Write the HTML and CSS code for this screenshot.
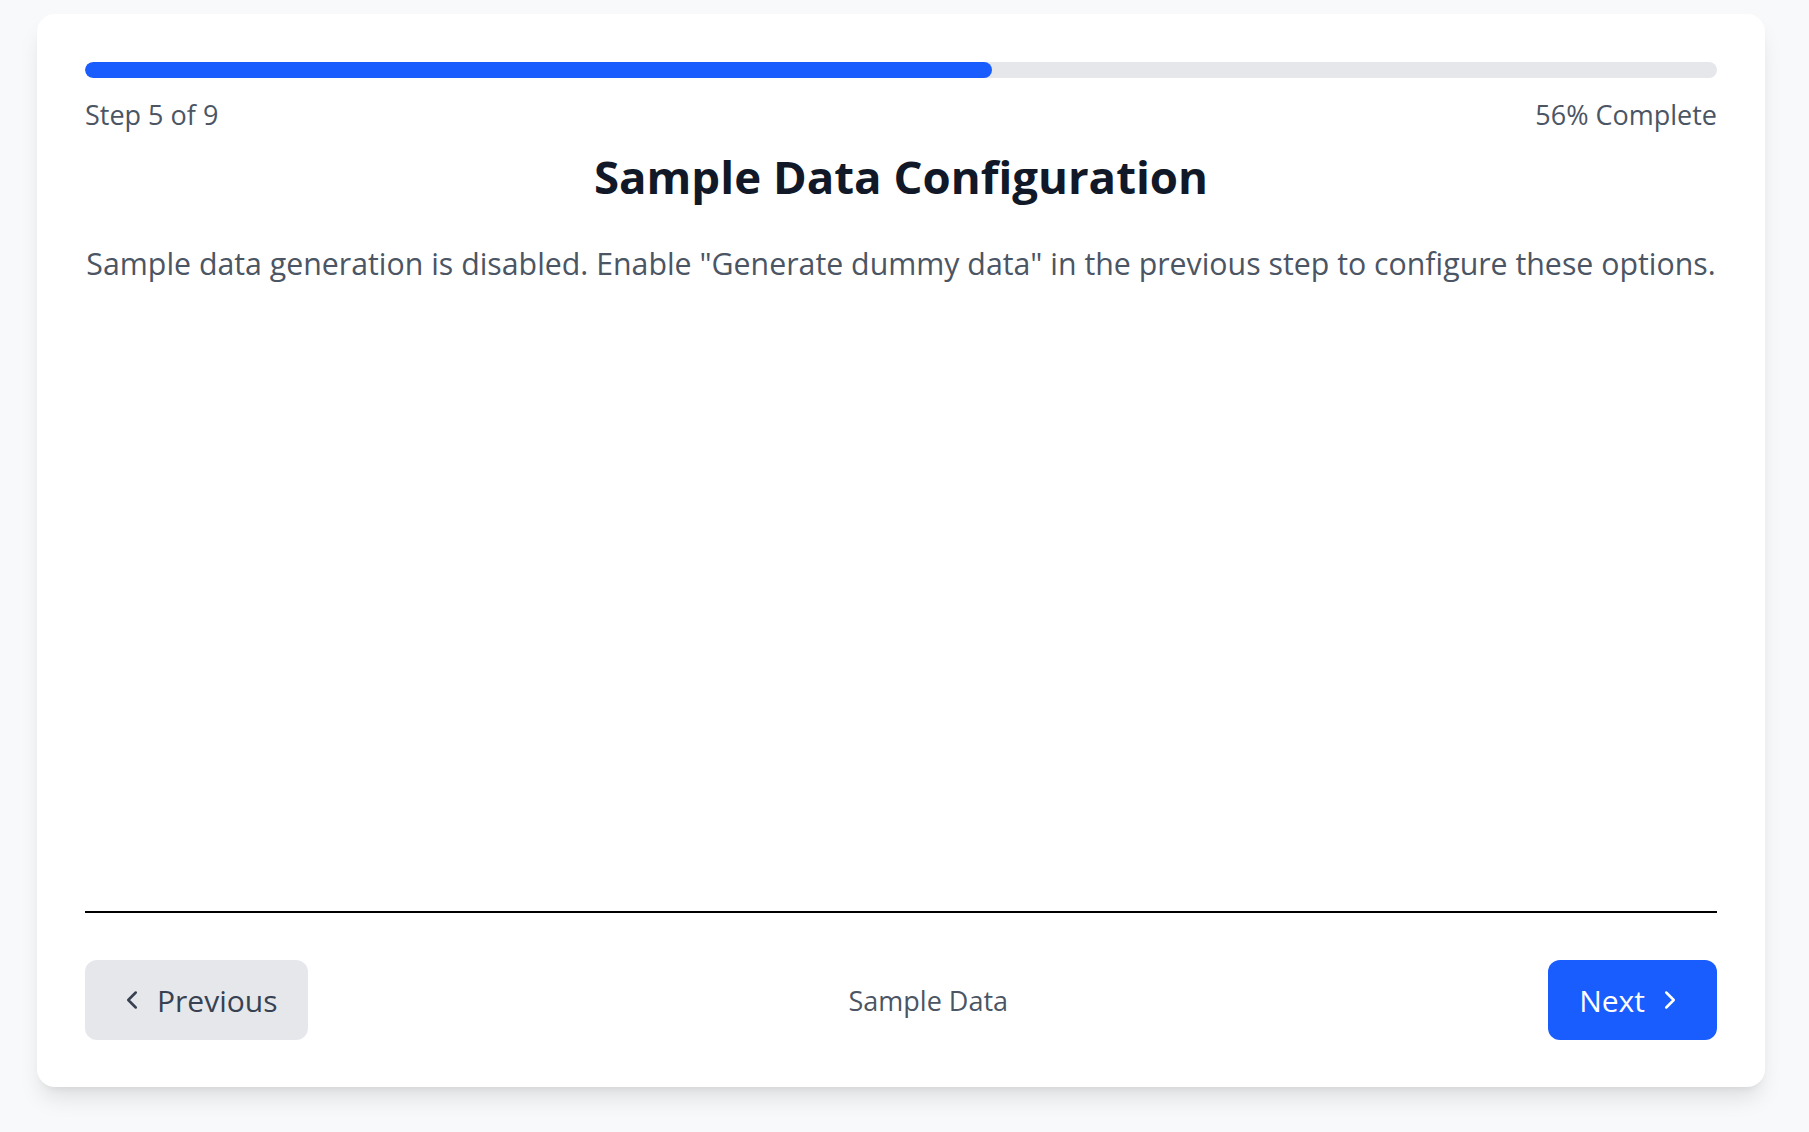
FILE: index.html
```html
<!DOCTYPE html>
<html lang="en">
<head>
<meta charset="utf-8">
<title>Sample Data Configuration</title>
<link rel="stylesheet" href="styles.css">
</head>
<body>
<div class="card">
  <div class="content">
    <div class="progress">
      <div class="progress-fill" style="width: 55.56%"></div>
    </div>
    <div class="progress-meta">
      <span>Step 5 of 9</span>
      <span>56% Complete</span>
    </div>
    <h1 class="title">Sample Data Configuration</h1>
    <p class="desc">Sample data generation is disabled. Enable "Generate dummy data" in the previous step to configure these options.</p>
  </div>
  <div class="footer">
    <button class="btn btn-prev" type="button">
      <svg class="chev" viewBox="0 0 24 24" fill="none" stroke="currentColor" stroke-width="2" stroke-linecap="round" stroke-linejoin="round"><path d="m15 18-6-6 6-6"/></svg>
      <span>Previous</span>
    </button>
    <span class="step-name">Sample Data</span>
    <button class="btn btn-next" type="button">
      <span>Next</span>
      <svg class="chev" viewBox="0 0 24 24" fill="none" stroke="currentColor" stroke-width="2" stroke-linecap="round" stroke-linejoin="round"><path d="m9 18 6-6-6-6"/></svg>
    </button>
  </div>
</div>
</body>
</html>
```
FILE: styles.css
```css
html, body {
  margin: 0;
  padding: 0;
  background: #f8f9fb;
  font-family: "Open Sans", "Noto Sans", "Liberation Sans", sans-serif;
}

body {
  padding: 14px 0 0 37px;
  height: 1132px;
  box-sizing: border-box;
}

.card {
  width: 1728px;
  height: 1073px;
  box-sizing: border-box;
  background: #ffffff;
  border-radius: 18px;
  box-shadow: 0 15px 22px -4px rgba(0, 0, 0, 0.1), 0 6px 9px -6px rgba(0, 0, 0, 0.1);
  padding: 48px 48px 47px;
  display: flex;
  flex-direction: column;
}

.content {
  flex: 1;
}

.progress {
  height: 16px;
  border-radius: 8px;
  background: #e5e7eb;
  overflow: hidden;
}

.progress-fill {
  height: 100%;
  background: #1a5dff;
  border-radius: 8px;
}

.progress-meta {
  margin-top: 17px;
  display: flex;
  justify-content: space-between;
  font-size: 27px;
  line-height: 40px;
  color: #4b5563;
}

.title {
  margin: 13px 0 0;
  text-align: center;
  font-size: 45.6px;
  line-height: 56px;
  font-weight: 700;
  color: #111827;
}

.desc {
  margin: 39px 0 0;
  text-align: center;
  font-size: 30.3px;
  line-height: 42px;
  color: #4b5563;
  white-space: nowrap;
}

.footer {
  border-top: 2px solid #000000;
  padding-top: 47px;
  display: flex;
  justify-content: space-between;
  align-items: center;
}

.btn {
  height: 80px;
  border: none;
  border-radius: 12px;
  display: flex;
  align-items: center;
  gap: 10px;
  font-family: inherit;
  font-size: 30px;
  cursor: pointer;
}

.btn-prev {
  background: #e5e7eb;
  color: #374151;
  padding: 0 31px 0 32px;
}

.btn-next {
  background: #1a5dff;
  color: #ffffff;
  padding: 0 32px 0 31px;
}

.chev {
  width: 30px;
  height: 30px;
  flex: none;
}

.step-name {
  font-size: 27px;
  color: #4b5563;
}
```
